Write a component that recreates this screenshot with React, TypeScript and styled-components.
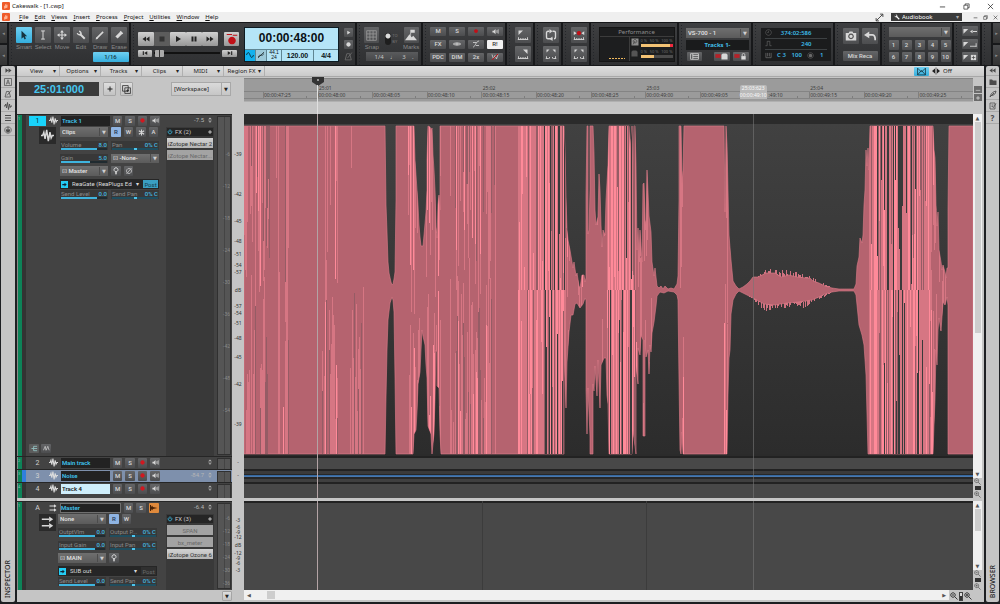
import React from "react";
import styled, { createGlobalStyle, css } from "styled-components";

const GlobalStyle = createGlobalStyle`
  * { box-sizing: border-box; }
  html, body { margin: 0; padding: 0; }
  body { background: #1d1f22; color: #222; font: 6px/8px "Noto Sans", "Open Sans", sans-serif; }
  button, input, select { font: inherit; color: inherit; border: 0; margin: 0; padding: 0; border-radius: 0; min-width: 0; }
  button { cursor: pointer; }
  svg { display: block; flex: none; }
`;

/* ---------- icons ---------- */

type IconShape = { d: string; fill?: boolean; w?: number; color?: string };

const icons: Record<string, IconShape[]> = {
  arrow: [{ d: "M4 1 L4 14 L7 11 L9 15 L11 14 L9.500 10 L13 10Z", fill: true }],
  ibeam: [{ d: "M5 1.500H11M5 14.500H11M8 1.500V14.500", w: 1.6 }],
  move: [{ d: "M8 2V14M2 8H14", w: 1.8 }, { d: "M8 0l3 4H5zM8 16l3-4H5zM0 8l4-3v6zM16 8l-4-3v6z", fill: true }],
  wrench: [{ d: "M6 6 L14 14", w: 3 }, { d: "M2 5a4 4 0 0 0 6 2M5 2a4 4 0 0 1 3 5", w: 2.2 }],
  draw: [{ d: "M3 13L13 3", w: 2.6 }, { d: "M1 15l1-4 3 3z", fill: true }],
  erase: [{ d: "M4 12L12 4", w: 5 }, { d: "M10 2l4 4", w: 2 }],
  rew: [{ d: "M8 3v10L1 8zM15 3v10L8 8z", fill: true }],
  ffw: [{ d: "M8 3v10l7-5zM1 3v10l7-5z", fill: true }],
  stop: [{ d: "M3 3h10v10H3z", fill: true }],
  play: [{ d: "M4 2v12l10-6z", fill: true }],
  pause: [{ d: "M3 3h4v10H3zM9 3h4v10H9z", fill: true }],
  toStart: [{ d: "M2 3h3v10H2zM14 3v10L6 8z", fill: true }],
  toEnd: [{ d: "M11 3h3v10h-3zM2 3v10l8-5z", fill: true }],
  record: [{ d: "M8 5a5 5 0 1 0 .01 0z", fill: true, color: "#c01018" }, { d: "M1 2H8M9 3h6", w: 1.6, color: "#c01018" }],
  dot: [{ d: "M8 3a5 5 0 1 0 .01 0z", fill: true }],
  grid: [{ d: "M1 1H15V15H1zM1 5.700H15M1 10.300H15M5.700 1V15M10.300 1V15", w: 1.2 }],
  marks: [{ d: "M0 15L6 7l3 4 2-2 5 6zM8 1h5v4H8z", fill: true }, { d: "M7.500 1V9", w: 1 }],
  speaker: [{ d: "M1 6h3l4-4v12l-4-4H1z", fill: true }, { d: "M10 5v6M12.500 4v8M15 3v10", w: 1.2 }],
  wave: [{ d: "M0 8H2L3.500 4L5 12L7 1L9 15L11 4L12.500 11L14 8H16", w: 1.8 }],
  sine: [{ d: "M1 8C4 0 6 3 8 8S12 16 15 8", w: 1.5 }],
  slash: [{ d: "M2 14L14 2M3 12C3 5 13 12 13 5", w: 1.3 }],
  metronome: [{ d: "M5 3h5l3 11H2zM6 11l8-10", w: 1.5 }],
  flagStart: [{ d: "M2 2h6l-6 6z", fill: true }, { d: "M1 14H15M2 14v-3M5 14v-2M8 14v-2M11 14v-2M14 14v-3", w: 1.2 }],
  flagEnd: [{ d: "M14 2H8l6 6z", fill: true }, { d: "M1 14H15M2 14v-3M5 14v-2M8 14v-2M11 14v-2M14 14v-3", w: 1.2 }],
  loop: [{ d: "M6 3H4a2 2 0 0 0-2 2v6a2 2 0 0 0 2 2h6M10 3h2a2 2 0 0 1 2 2v6a2 2 0 0 1-2 2", w: 1.8 }, { d: "M6 0l4 3-4 3zM10 10v6l-4-3z", fill: true }],
  corners: [{ d: "M2 2h4L2 6zM14 2h-4l4 4z", fill: true }, { d: "M1 14H5M11 14h4M2 14v-3M14 14v-3M6 12v2M10 12v2", w: 1.2 }],
  punch: [{ d: "M1 3v5l4-2.500zM15 3v5l-4-2.500z", fill: true }, { d: "M8 2.500a3 3 0 1 0 .01 0z", fill: true, color: "#c01018" }, { d: "M1 14H15M2 14v-3M5 14v-2M8 14v-2M11 14v-2M14 14v-3", w: 1.2 }],
  camera: [{ d: "M1 4h4l1-2h4l1 2h4v10H1z", fill: true }, { d: "M8 5.500a3 3 0 1 0 .01 0z", w: 1.6, color: "#555" }],
  undo: [{ d: "M7 2v9L0 6.500z", fill: true }, { d: "M5 6.500h6c3 0 4 3 4 7", w: 2.4 }],
  clock: [{ d: "M8 1.500a6.500 6.500 0 1 0 .01 0zM8 4v4H5", w: 1.2 }],
  pulse: [{ d: "M1 13H5V3H11V13H15", w: 1.4 }],
  keys: [{ d: "M2 2V13H14V2M6 2v8M10 2v8", w: 1.8 }],
  knob: [{ d: "M8 1.500a6.500 6.500 0 1 0 .01 0z", w: 1.2 }, { d: "M8 4a4 4 0 1 0 .01 0z", fill: true }],
  marker: [{ d: "M1 2h11l-11 11z", fill: true }],
  left: [{ d: "M6 4l-6 4 6 4zM5 7h11v2H5z", fill: true }],
  lineTo: [{ d: "M0 12H15M14 5V13", w: 2 }],
  addBox: [{ d: "M2 2H14V14H2z", fill: true }, { d: "M8 4V12M4 8H12", w: 1.6, color: "#444" }],
  expand: [{ d: "M3 13L13 3M9 2h5v5M2 9v5h5", w: 1.3 }],
  min: [{ d: "M2 9H14", w: 1.6 }],
  restore: [{ d: "M2 5H11V14H2zM5 5V2H14V11H11", w: 1.4 }],
  close: [{ d: "M2 2L14 14M14 2L2 14", w: 1.5 }],
  plus: [{ d: "M8 3V13M3 8H13", w: 2 }],
  dup: [{ d: "M1 1H11V11H1zM5 5H15V15H5zM10 7.500v5M7.500 10h5", w: 1.3 }],
  fold: [{ d: "M1 3h5l2 2h7v9H1z", fill: true }],
  feather: [{ d: "M2 14C4 6 8 4 14 2C13 8 10 11 4 11M2 14L10 6", w: 1.8 }],
  note: [{ d: "M2 2h10v12H2zM5 6h4M5 9h3M14 3l-6 9", w: 1.5 }],
  list: [{ d: "M2 3H14M2 8H14M2 13H14", w: 2.4 }],
  letterBox: [{ d: "M1 1H15V15H1zM4.500 13L8 3.500L11.500 13M6 10h4", w: 1.4 }],
  dial: [{ d: "M8 1.500a6.500 6.500 0 1 0 .01 0z", w: 1.4 }, { d: "M8 5a4 4 0 1 0 .01 0zM7 2h2v5H7z", fill: true }],
  routes: [{ d: "M1 4H10M1 12H10", w: 2 }, { d: "M10 0.500l5 3.500-5 3.500zM10 8.500l5 3.500-5 3.500z", fill: true }],
  dblArrow: [{ d: "M8 1l4 4H4zM8 15l4-4H4z", fill: true }, { d: "M3 8H13", w: 1.6 }],
  power: [{ d: "M5 4a5 5 0 1 0 6 0M8 1v7", w: 2 }],
  star: [{ d: "M8 1V15M2 4L14 12M14 4L2 12", w: 2.4 }],
  crossfade: [{ d: "M1 2V14H15V2L8 9Z M1 14L8 6L15 14", w: 1.4 }],
  snapTo: [{ d: "M6 3v10L0 8zM10 3v10l6-5z", fill: true }, { d: "M8 1V15", w: 1.4 }],
  phase: [{ d: "M8 3a5 5 0 1 0 .01 0zM3 14L13 2", w: 1.4 }],
  mic: [{ d: "M8 1.500a4 4 0 1 0 .01 0zM8 10v5M6 12h4", w: 2 }],
  zoomIn: [{ d: "M6 1.500a4.500 4.500 0 1 0 .01 0zM9.500 9.500L15 15M6 4v4M4 6h4", w: 1.7 }],
  zoomOut: [{ d: "M6 1.500a4.500 4.500 0 1 0 .01 0zM9.500 9.500L15 15M4 6h4", w: 1.7 }],
  goRight: [{ d: "M1 6h7V2l7 6-7 6v-4H1z", fill: true }],
  zig: [{ d: "M1 12L5 3L7 12L11 3L14 12", w: 1.6 }],
  lanes: [{ d: "M1 8H6V3H14M6 8H14M6 8V13H14", w: 1.8 }],
  autom: [{ d: "M2 14C7 14 7 3 14 2M2 5h7M8 11h6", w: 1.6 }],
  noWrite: [{ d: "M2 3l3 9 3-7 3 7 3-9", w: 1.5 }, { d: "M2 14L14 2", w: 2, color: "#c01018" }],
  ends: [{ d: "M1 8h14M4 5L1 8l3 3M12 5l3 3-3 3M8 4v8M6 5v6M10 5v6", w: 1.5 }],
  burst: [{ d: "M1 2v12", w: 2 }, { d: "M1 8L4 3l2 3 9 2-9 2-2 3z", fill: true }],
  logo: [{ d: "M3 15V8l3-2V3l3-2v5l3-2v8z", fill: true }],
  lock: [{ d: "M3 7h10v8H3z", fill: true }, { d: "M5 7V4a3 3 0 0 1 6 0v3", w: 1.8 }],
  disk: [{ d: "M1 1h14v14H1z", fill: true }, { d: "M8 3a3.500 3.500 0 1 0 .01 0zM8 6L4 13", w: 1.5, color: "#444" }],
  ladder: [{ d: "M1 3H15V13H1zM5 3V13M5 6.300H15M5 9.600H15", w: 1.4 }],
  page: [{ d: "M4 1h8l3 3v11H1V4z", fill: true }],
  rec: [{ d: "M1 3h14v10H1z", fill: true }],
};

function Icon({ name, size = 8, color }: { name: string; size?: number; color?: string }) {
  return (
    <svg width={size} height={size} viewBox="0 0 16 16" aria-hidden="true" color={color}>
      {icons[name].map((s, i) => (
        <path
          key={i}
          d={s.d}
          fill={s.fill ? s.color || "currentColor" : "none"}
          stroke={s.fill ? "none" : s.color || "currentColor"}
          strokeWidth={s.w || 1.5}
        />
      ))}
    </svg>
  );
}

/* ---------- frame ---------- */

const Shell = styled.div`
  display: flex;
  flex-direction: column;
  min-height: 100vh;
  overflow: hidden;
`;
const TitleBar = styled.header`
  display: flex;
  align-items: center;
  gap: 2px;
  height: 12px;
  padding: 0 6px 0 2px;
  background: #fff;
  color: #111;
`;
const Logo = styled.span`
  display: grid;
  place-items: center;
  width: 8px;
  height: 8px;
  border-radius: 1px;
  background: #ef5b2a;
  color: #ffb596;
`;
const WindowButtons = styled.div<{ $gap: number }>`
  display: flex;
  margin-left: auto;
  gap: ${(p) => p.$gap}px;
  button { background: none; }
`;
const MenuBar = styled.nav`
  display: flex;
  align-items: center;
  height: 10px;
  padding: 0 2px;
  background: #efefef;
  color: #111;
`;
const MenuItem = styled.button`
  background: none;
  margin-right: 6px;
  &::first-letter { text-decoration: underline; }
`;
const MenuList = styled.div`
  display: flex;
  flex: 1;
  padding-left: 9px;
`;
const ScreenSelect = styled.label`
  display: flex;
  align-items: center;
  gap: 2px;
  width: 71px;
  height: 8px;
  margin: 0 11px 0 7px;
  padding: 0 3px;
  background: #3b3b3b;
  color: #fff;
  select { flex: 1; appearance: none; background: none; }
  &::after { content: "▾"; font: 6px/8px "DejaVu Sans", sans-serif; color: #aaa; }
`;

/* ---------- control bar ---------- */

const ControlBar = styled.section`
  display: flex;
  gap: 2px;
  height: 44px;
  padding: 1px 0;
  background: #17181a;
  color: #c6c6c6;
`;
const Module = styled.div<{ $w: number; $grow?: boolean; $dir?: string; $gap?: number }>`
  display: flex;
  flex: ${(p) => (p.$grow ? 1 : 0)} 0 ${(p) => p.$w}px;
  flex-direction: ${(p) => p.$dir || "row"};
  align-items: center;
  justify-content: center;
  gap: ${(p) => p.$gap ?? 3}px;
  padding: 0 2px 0 7px;
  overflow: hidden;
  background:
    radial-gradient(circle, #24262a 1px, transparent 1px) 1px 1px / 3px 3px repeat-y,
    linear-gradient(#3e3f41, #2f3032);
`;
const EdgeTabs = styled.div`
  display: grid;
  gap: 2px;
  width: 7px;
  button { background: linear-gradient(#4a4b4d, #333); color: #8c8c8c; font: 5px/8px "DejaVu Sans", sans-serif; }
`;
const Row = styled.div<{ $gap?: number }>`
  display: flex;
  align-items: center;
  gap: ${(p) => p.$gap ?? 3}px;
`;
const Stack = styled.div<{ $gap?: number }>`
  display: flex;
  flex-direction: column;
  gap: ${(p) => p.$gap ?? 3}px;
`;
const Key = styled.button<{ $w?: number; $h?: number; $tone?: "light" | "cyan" | "dark" | "blue" | "orange" | "on" }>`
  display: flex;
  align-items: center;
  justify-content: center;
  flex: none;
  width: ${(p) => p.$w ?? 16}px;
  height: ${(p) => p.$h ?? 9}px;
  border-radius: 1px;
  font-weight: 500;
  font-family: Roboto, sans-serif;
  line-height: 8px;
  background: linear-gradient(#646567, #4c4d4f);
  color: #d8d8d8;
  ${(p) => p.$tone === "light" && css`background: linear-gradient(#d0d0d0, #979797); color: #222;`}
  ${(p) => p.$tone === "on" && css`background: #f2f2f2; color: #333;`}
  ${(p) => p.$tone === "cyan" && css`background: linear-gradient(#6fd0f2, #35aedd); color: #16343f;`}
  ${(p) => p.$tone === "dark" && css`background: #5c5c5c; color: #333;`}
  ${(p) => p.$tone === "blue" && css`background: #8fb4e2; color: #1d3350;`}
  ${(p) => p.$tone === "orange" && css`background: #e08a3c; color: #4a2205;`}
`;
const Tool = styled.div`
  display: flex;
  flex-direction: column;
  align-items: center;
  gap: 1px;
  width: 19px;
  color: #8b8b8b;
  font: 6px/7px "Liberation Sans", Arial, sans-serif;
`;
const ModuleBody = styled.div`
  display: flex;
  flex-direction: column;
  gap: 1px;
  align-items: flex-end;
`;
const Position = styled.input`
  width: 66px;
  height: 7px;
  appearance: none;
  background: linear-gradient(#111, #111) center / 100% 2px no-repeat;
  &::-webkit-slider-thumb { appearance: none; width: 9px; height: 7px; border-radius: 1px; background: linear-gradient(90deg, #aaa 40%, #333 40% 60%, #aaa 60%); }
`;
const Lcd = styled.div`
  display: flex;
  flex-direction: column;
  width: 97px;
  height: 35px;
  border: 1px solid #0d1b22;
  background: #b5e5f7;
  color: #0a1216;
`;
const LcdTime = styled.div`
  flex: 1;
  text-align: center;
  font: bold 12px/21px "Liberation Sans", Arial, sans-serif;
`;
const LcdRow = styled.div`
  display: grid;
  grid-template-columns: 11px 11px 15px 1fr 24px;
  align-items: center;
  height: 12px;
  border-top: 1px solid #5f8592;
  text-align: center;
  font: bold 7px/11px "Liberation Sans", Arial, sans-serif;
  > * { border-right: 1px solid #5f8592; height: 11px; }
  > :last-child { border: 0; }
`;
const LcdIcon = styled.span<{ $on?: boolean }>`
  display: grid;
  place-items: center;
  background: ${(p) => (p.$on ? "#12b2ee" : "#9dc9d8")};
`;
const Rate = styled.span`
  font-size: 5px;
  font-weight: 400;
  line-height: 5px;
`;
const Switch = styled.span`
  width: 6px;
  height: 12px;
  border-radius: 3px;
  background: radial-gradient(circle at 3px 3px, #ddd 2px, transparent 3px), #1e1e1e;
`;
const SwitchText = styled.span`
  font-size: 4px;
  line-height: 6px;
  color: #777;
`;
const NoteLength = styled.div`
  display: flex;
  align-items: center;
  justify-content: space-between;
  width: 52px;
  height: 9px;
  padding: 0 4px 0 9px;
  background: linear-gradient(#5a5b5d, #464749);
`;
const Perf = styled.div`
  display: grid;
  grid-template: 9px 1fr / 29px 1fr;
  width: 76px;
  height: 35px;
  background: #1d1e1f;
  border: 1px solid #151515;
  color: #8f8f8f;
`;
const PerfTitle = styled.div`
  grid-column: 1 / 3;
  text-align: center;
  border-bottom: 1px solid #3c3c3c;
`;
const PerfCores = styled.div`
  align-self: end;
  height: 1px;
  margin: 0 4px 2px 9px;
  background: repeating-linear-gradient(90deg, #f0b95c 0 2px, transparent 2px 3px);
`;
const PerfMeters = styled.div`
  display: grid;
  grid-template: 1fr 1fr / 8px 1fr;
  gap: 0 2px;
  padding: 0 1px 1px;
  align-items: center;
  border-left: 1px solid #3c3c3c;
`;
const Meter = styled.div<{ $v: number; $hot?: boolean }>`
  font-size: 4px;
  line-height: 6px;
  display: flex;
  flex-wrap: wrap;
  justify-content: space-between;
  color: #6f6f6f;
  &::after {
    content: "";
    width: 100%;
    height: 3px;
    background: linear-gradient(90deg, #f3c274 ${(p) => p.$v}%, ${(p) => (p.$hot ? "#ef2a3e" : "#4b4b4b")} ${(p) => p.$v}%);
  }
`;
const Drop = styled.div<{ $h?: number }>`
  display: flex;
  width: 100%;
  height: ${(p) => p.$h ?? 10}px;
  align-items: center;
  background: linear-gradient(#6f6f6f, #5b5b5b);
  color: #e4e4e4;
  font: 500 6px/8px Roboto, "DejaVu Sans", sans-serif;
  select { flex: 1; height: 100%; appearance: none; background: none; padding-left: 2px; line-height: 8px; outline: none; }
  &::after { content: "▼"; width: 8px; flex: none; text-align: center; font: 5px/8px "DejaVu Sans", sans-serif; color: #d0d0d0; border-left: 1px solid #4c4c4c; }
`;
const Screen = styled.div`
  width: 100%;
  padding: 1px 0;
  text-align: center;
  background: #1a1b1c;
  color: #42bfe8;
  font-weight: 700;
`;
const NowTable = styled.dl`
  display: grid;
  grid-template-rows: repeat(3, 11px);
  width: 70px;
  margin: 0;
  padding: 0 4px;
  background: #1b1c1d;
  color: #6a6a6a;
  div { display: flex; align-items: center; gap: 3px; justify-content: space-between; border-bottom: 1px solid #3d4143; padding-right: 15px; }
  div:last-child { border: 0; padding-right: 3px; }
  dd { margin: 0; color: #3dbbe8; font-weight: 600; }
  dt { display: flex; }
`;
const NumberGrid = styled.div`
  display: grid;
  grid-template-columns: repeat(5, 10px);
  gap: 2px 3px;
  button { width: 10px; height: 10px; }
`;

/* ---------- body ---------- */

const Body = styled.main`
  display: grid;
  grid-template-columns: 14px minmax(0, 1fr) 13px;
  gap: 2px;
  flex: 1;
  padding: 0 1px 2px 1px;
  background: #1d1f22;
`;
const Dock = styled.aside`
  display: flex;
  flex-direction: column;
  background: #c5c5c5;
  border-radius: 2px;
  color: #4b4b4b;
  button { display: grid; place-items: center; height: 12px; border-bottom: 1px solid #aaa; background: none; font-size: 8px; font-weight: 700; }
  button:first-child { height: 10px; }
`;
const DockTitle = styled.span`
  margin-top: auto;
  padding: 4px 0 0;
  writing-mode: vertical-rl;
  transform: rotate(180deg);
  line-height: 14px;
  font-size: 7px;
  font-weight: 500;
  color: #222;
`;
const TrackView = styled.section`
  display: flex;
  flex-direction: column;
  background: #c5c5c5;
`;
const ViewMenu = styled.nav`
  display: flex;
  align-items: center;
  height: 11px;
  padding-left: 2px;
  background: linear-gradient(#dedede, #cacaca);
  border-bottom: 1px solid #a8a8a8;
`;
const ViewMenuItem = styled.button`
  display: flex;
  justify-content: space-between;
  align-items: center;
  width: 41px;
  height: 10px;
  padding: 0 3px 0 1px;
  background: none;
  border-right: 1px solid #b0b0b0;
  white-space: nowrap;
  span { flex: 1; text-align: center; }
  &::after { content: "▾"; font: 6px/8px "DejaVu Sans", sans-serif; }
`;
const ViewTools = styled.div`
  display: flex;
  align-items: center;
  gap: 3px;
  margin-left: auto;
  padding-right: 11px;
  label { display: flex; align-items: center; gap: 3px; }
  select { width: 30px; appearance: none; background: none; }
`;
const Columns = css`
  display: grid;
  grid-template-columns: 215px 12px minmax(0, 1fr) 11px;
  grid-template-rows: minmax(0, 1fr);
`;
const Head = styled.div`
  ${Columns}
  height: 37px;
`;
const HeadTools = styled.div`
  display: flex;
  gap: 4px;
  height: 14px;
  margin: 5px 1px 0 2px;
`;
const NowTime = styled.output`
  width: 80px;
  text-align: center;
  background: #3a3a3a;
  color: #45c6f0;
  font: bold 11px/14px "Liberation Sans", Arial, sans-serif;
`;
const PlainKey = styled.button`
  display: grid;
  place-items: center;
  width: 13px;
  border: 1px solid #a5a5a5;
  border-radius: 1px;
  background: linear-gradient(#dedede, #c2c2c2);
`;
const Workspace = styled.label`
  display: flex;
  width: 60px;
  margin-left: auto;
  border: 1px solid #a8a8a8;
  background: linear-gradient(#dadada, #c6c6c6);
  select { flex: 1; appearance: none; background: none; padding-left: 2px; }
  &::after { content: "▼"; width: 8px; text-align: center; border-left: 1px solid #a8a8a8; font: 5px/12px "DejaVu Sans", sans-serif; }
`;
const Ruler = styled.div`
  height: 24px;
  margin-top: 1px;
  background: #9b9b9b;
  border-top: 1px solid #858585;
  border-bottom: 1px solid #b0b0b0;
  color: #3e3e3e;
  font-size: 5px;
  line-height: 6px;
`;
const RulerRow = styled.div<{ $top?: boolean }>`
  display: flex;
  align-items: ${(p) => (p.$top ? "flex-end" : "center")};
  height: ${(p) => (p.$top ? 13 : 7)}px;
  border-bottom: 1px solid #848484;
`;
const RulerCell = styled.span<{ $n: number; $line?: boolean; $inset?: number }>`
  flex: ${(p) => p.$n} 1 0;
  min-width: 0;
  min-height: 6px;
  text-indent: ${(p) => p.$inset ?? 1}px;
  white-space: nowrap;
  ${(p) => p.$line && css`
    background:
      linear-gradient(#808080, #808080) 0 0 / 1px 100% no-repeat,
      linear-gradient(#7d7d7d, #7d7d7d) 80% 100% / 1px 2px no-repeat;
  `}
`;
const RulerZoom = styled.div`
  display: flex;
  flex-direction: column;
  gap: 1px;
  padding: 9px 2px 0 1px;
  button { display: grid; place-items: center; height: 7px; background: #6a6a6a; color: #ddd; }
`;

/* ---------- tracks ---------- */

const Tracks = styled.div`
  ${Columns}
  flex: 1;
  min-height: 384px;
`;
const Buses = styled.div`
  ${Columns}
  height: 89px;
  margin-top: 3px;
`;
const Strips = styled.div`
  display: flex;
  flex-direction: column;
  overflow: hidden;
  background: #2a2a2a;
  font: 6px/8px Roboto, sans-serif;
`;
const Strip = styled.article<{ $h?: number; $sel?: boolean }>`
  display: grid;
  grid-template-columns: 5px 4px minmax(0, 1fr) 50px 17px;
  grid-template-rows: minmax(0, 1fr);
  ${(p) => (p.$h ? css`height: ${p.$h}px;` : css`flex: 1;`)}
  min-height: 0;
  border-top: 1px solid #262626;
  overflow: hidden;
  background: ${(p) => (p.$sel ? "#7e90ac" : "#434343")};
`;
const ColorBar = styled.div`
  background: #0d8358;
  border-left: 1px solid #888;
  color: #7fc4a8;
  font-size: 4px;
`;
const Gutter = styled.div<{ $sel?: boolean }>`
  background: ${(p) => (p.$sel ? "#2f7fdc" : "#333")};
`;
const Controls = styled.div`
  display: flex;
  flex-direction: column;
  padding-left: 3px;
  height: 100%;
`;
const NameRow = styled.div`
  display: flex;
  align-items: center;
  gap: 3px;
  flex: none;
  height: 11px;
`;
const Num = styled.span<{ $on?: boolean }>`
  width: 17px;
  flex: none;
  height: 10px;
  text-align: center;
  font-size: 7px;
  line-height: 10px;
  color: #d2d2d2;
  ${(p) => p.$on && css`background: #19d3fb; color: #134;`}
`;
const NameField = styled.input<{ $edit?: boolean; $bus?: boolean }>`
  width: ${(p) => (p.$bus ? 61 : 49)}px;
  height: 10px;
  padding-left: 1px;
  background: ${(p) => (p.$edit ? "#cfeefb" : "#222")};
  color: ${(p) => (p.$edit ? "#222" : "#3fc3ee")};
  font-weight: 600;
  flex: none;
  ${(p) => p.$bus && css`border: 1px solid #6f6f6f; padding: 0;`}
`;
const Details = styled.div<{ $bus?: boolean }>`
  display: grid;
  flex: none;
  grid-template-columns: 17px 99px;
  gap: ${(p) => (p.$bus ? 2 : 4)}px;
  padding: 1px 0 0 10px;
`;
const TrackIcon = styled.div`
  display: grid;
  place-items: center;
  height: 17px;
  background: #2a2a2a;
  color: #d8d8d8;
`;
const Form = styled.div`
  display: flex;
  flex-direction: column;
  gap: 3px;
`;
const Pair = styled.div<{ $tight?: boolean }>`
  display: grid;
  grid-template-columns: 48px 48px;
  gap: 3px;
  height: 10px;
  align-items: center;
  ${(p) => p.$tight && css`margin-top: -3px;`}
`;
const Param = styled.label`
  display: grid;
  grid-template: 7px 2px / 1fr auto;
  padding: 0 1px;
  background: #383838;
  color: #8a8a8a;
  line-height: 7px;
  white-space: nowrap;
  output { color: #42bbe4; font-weight: 500; }
  input { grid-column: 1 / 3; }
`;
const Range = styled.input<{ $v: number; $center?: boolean }>`
  appearance: none;
  width: 100%;
  height: 2px;
  background: ${(p) =>
    p.$center
      ? "linear-gradient(90deg, #1f4d5e 48%, #4cc5ee 48% 54%, #1f4d5e 54%)"
      : `linear-gradient(90deg, #3fb4de ${p.$v}%, #202b30 ${p.$v}%)`};
  &::-webkit-slider-thumb { appearance: none; width: 1px; height: 1px; opacity: 0; }
`;
const SendBox = styled.div`
  display: flex;
  align-items: center;
  gap: 4px;
  height: 10px;
  padding: 0 1px;
  background: #262626;
  color: #dcdcdc;
  white-space: nowrap;
  select { flex: 1; appearance: none; background: none; }
  i { font: 6px/8px "DejaVu Sans", sans-serif; }
`;
const SendOn = styled.button`
  display: grid;
  place-items: center;
  width: 7px;
  height: 7px;
  background: #24cdf5;
  color: #123;
`;
const Post = styled.button<{ $on?: boolean }>`
  width: 15px;
  height: 8px;
  line-height: 7px;
  background: ${(p) => (p.$on ? "#3a9fc2" : "#303030")};
  color: ${(p) => (p.$on ? "#163c4b" : "#6a6a6a")};
`;
const LaneKeys = styled.div`
  display: flex;
  gap: 2px;
  margin-top: auto;
  padding-bottom: 3px;
`;
const FxCol = styled.div`
  display: flex;
  flex-direction: column;
  gap: 2px;
  padding: 0 1px;
  color: #c9c9c9;
`;
const Peak = styled.div`
  display: flex;
  align-items: center;
  justify-content: flex-end;
  gap: 3px;
  height: 10px;
  padding-right: 1px;
  color: #b5b5b5;
`;
const FxRack = styled.div`
  display: flex;
  flex: 1;
  flex-direction: column;
  gap: 2px;
  padding: 1px;
  background: #393939;
`;
const FxHead = styled.div`
  display: flex;
  align-items: center;
  gap: 2px;
  height: 8px;
  background: #252525;
  button { margin-left: auto; background: none; color: #eee; }
`;
const FxSlot = styled.button<{ $off?: boolean }>`
  height: 10px;
  overflow: hidden;
  line-height: 9px;
  white-space: nowrap;
  background: linear-gradient(#d2d2d2, #b5b5b5);
  color: #333;
  ${(p) => p.$off && css`background: #a3a3a3; color: #6a6a6a;`}
`;
const Vu = styled.div`
  display: flex;
  flex-direction: column;
  gap: 24px;
  margin: 1px 1px 1px 2px;
  padding-top: 33px;
  overflow: hidden;
  background: linear-gradient(90deg, #555 6px, #444 6px 7px, #555 7px);
  border: 1px solid #303030;
  color: #8a8a8a;
  font-size: 5px;
  text-align: right;
`;
const VuBus = styled(Vu)`
  padding-top: 10px;
  gap: 5px;
`;
const Scale = styled.div`
  display: flex;
  flex-direction: column;
  font-size: 5px;
  line-height: 6px;
  color: #333;
  background: #c5c5c5;
`;
const Tick = styled.span<{ $n: number }>`
  display: flex;
  flex: ${(p) => p.$n} 1 0;
  min-height: 0;
  align-items: flex-end;
  justify-content: center;
`;
const Clips = styled.div`
  position: relative;
  display: flex;
  flex-direction: column;
  background: #262626;
`;
const Lane = styled.div<{ $h?: number; $kind?: "audio" | "line" }>`
  ${(p) => (p.$h ? css`height: ${p.$h}px;` : css`flex: 1;`)}
  border-top: 2px solid #222;
  background: #484848;
  ${(p) =>
    p.$kind === "line" &&
    css`background: linear-gradient(#3a3a3a 3px, #272727 3px 4px, #35689f 4px 5px, #4a78ad 5px 6px, #272727 6px 8px, #3f3f3f 8px);`}
`;
const WaveLane = styled.div`
  display: flex;
  flex-direction: column;
  flex: 1;
  padding-top: 10px;
  background: #2b2b2b;
  svg { width: 100%; height: 100%; }
`;
const WaveFill = styled.div`
  flex: 1 1 0;
  min-height: 0;
`;
const BeatLine = styled.i<{ $x: number; $strong?: boolean }>`
  position: absolute;
  top: 0;
  bottom: 0;
  left: ${(p) => p.$x}%;
  width: 1px;
  background: ${(p) => (p.$strong ? "#b3a3a5" : "#3c3c3c")};
`;
const Hover = styled(BeatLine)`
  background: #77777799;
`;
const PlayMarker = styled.div`
  position: absolute;
  top: 0;
  left: 10%;
  margin-left: -5px;
`;
const RulerWrap = styled.div`
  position: relative;
  &::after { content: ""; position: absolute; left: 10%; top: 8px; bottom: 0; width: 1px; background: #e0e0e0; }
`;
const HoverTag = styled.span`
  position: absolute;
  left: 68%;
  top: 8px;
  width: 27px;
  height: 14px;
  border-radius: 2px 2px 0 0;
  background: #b9b9b9;
  color: #fafafa;
  font-size: 5px;
  line-height: 7px;
  text-align: center;
  white-space: nowrap;
  span { display: block; }
`;
const VScroll = styled.div`
  display: flex;
  flex-direction: column;
  align-items: center;
  background: #f0f0f0;
  border-right: 2px solid #c5c5c5;
  color: #555;
  font: 5px/8px "DejaVu Sans", sans-serif;
`;
const VThumb = styled.i<{ $h: number }>`
  width: 6px;
  height: ${(p) => p.$h}%;
  margin-bottom: auto;
  background: #cdcdcd;
`;
const ZoomStack = styled.div`
  display: flex;
  flex-direction: column;
  align-items: center;
  align-self: stretch;
  background: #c5c5c5;
  button { background: none; display: block; }
  i { width: 6px; height: 4px; margin: 1px 0; background: #333; }
`;
const Foot = styled.div`
  ${Columns}
  grid-template-columns: 215px 12px minmax(0, 1fr) 35px;
  height: 12px;
`;
const FootKey = styled(PlainKey)`
  width: 10px;
  height: 10px;
  margin: 1px 0 0 auto;
  font: 5px/8px "DejaVu Sans", sans-serif;
`;
const HScroll = styled.div`
  display: flex;
  align-items: center;
  gap: 16px;
  height: 10px;
  padding: 0 3px;
  background: #f0f0f0;
  color: #555;
  font: 5px/8px "DejaVu Sans", sans-serif;
  i { width: 8px; height: 8px; background: #cdcdcd; margin-right: auto; }
`;
const HZoom = styled.div`
  display: flex;
  align-items: center;
  gap: 1px;
  padding-left: 1px;
  button { background: none; }
  i { width: 4px; height: 9px; border: 1px solid #444; background: linear-gradient(#ddd 50%, #333 50%); }
`;

/* ---------- waveform ---------- */

const X0 = 244;
const Y0 = 124;
const MID = 290;

// Upper and lower outlines of the clip, as x,y pairs.
const upper =
  "244,126 385,126 386,205 387,232 388,262 389,273 391,282 392,285 393,284 394,279 395,272 396,200 396,126 414,126 415,160 417,190 418,205 419,225 420,237 421,246 423,246 424,235 426,212 427,190 427,160 428,126 430,127 431,131 432,128 433,155 434,170 435,190 436,227 437,238 438,205 439,195 440,210 440,126 564,126 565,150 566,197 567,230 568,240 570,250 572,262 573,268 574,262 576,276 577,273 579,286 580,288 582,275 584,275 585,282 586,278 586,196 587,126 588,126 588,234 589,230 590,190 590,126 593,126 594,153 595,210 596,225 598,217 599,174 600,190 601,225 602,247 603,230 605,235 606,200 608,165 609,126 629,126 630,150 632,126 633,190 634,126 635,126 636,165 637,250 638,228 639,260 640,230 642,262 643,184 644,183 645,220 646,225 647,170 648,192 649,216 651,232 652,262 654,276 655,268 657,286 659,288 661,286 663,289 665,286 668,289 671,288 674,289 677,284 678,276 679,200 679,126 681,126 682,185 683,170 684,126 724,126 725,212 726,126 727,145 728,190 729,235 731,260 733,281 736,286 739,289 743,287 747,284 750,281 753,277 758,277 766,273 775,273 781,277 789,275 797,277 806,278 810,278 813,281 819,283 825,286 832,288 839,289 854,289 856,284 857,266 859,257 860,238 862,243 863,235 864,205 865,190 866,150 867,166 868,148 869,170 870,126 933,126 934,150 935,158 936,205 937,226 938,212 939,250 941,262 942,270 943,265 945,272 946,278 947,268 948,268 948,210 949,126 973,126";
const lower =
  "973,454 948,454 948,305 947,297 945,305 943,302 941,331 939,318 938,330 937,365 936,350 935,400 934,425 933,454 868,454 866,375 864,345 862,335 859,325 857,305 856,295 854,291 839,291 832,292 825,294 819,297 812,300 806,301 798,302 787,303 774,305 764,304 755,299 749,296 743,293 739,291 736,294 733,300 731,314 730,350 729,358 728,395 727,454 683,454 682,432 681,454 680,450 679,380 678,300 677,295 674,292 668,291 664,293 660,292 657,296 656,306 654,322 652,333 651,352 650,345 649,374 648,350 646,357 645,340 645,436 643,436 643,340 641,335 640,355 638,348 638,384 636,366 636,454 633,430 632,454 609,454 608,404 607,395 606,358 604,358 601,365 600,408 598,360 597,396 595,366 594,391 593,384 593,454 590,454 590,436 588,388 587,434 586,390 586,300 585,298 583,304 580,308 577,303 575,304 573,315 571,315 569,332 567,362 566,408 564,350 564,454 441,454 440,433 439,388 437,386 437,352 436,350 435,398 434,433 432,454 431,434 428,426 427,378 426,365 425,345 423,336 422,330 421,350 420,372 418,384 417,412 416,430 414,434 413,454 396,454 395,378 394,312 393,300 392,297 391,300 390,303 388,320 387,350 386,397 385,454 244,454";

// Dense bursts are striped from edge to centre; the others carry partial streaks.
// up/down give the share of columns streaked above and below the centre line.
type Burst = { a: number; b: number; up: number; down: number; dense?: boolean; dark?: number; bright?: number; gaps?: number };
const bursts: Burst[] = [
  { a: 244, b: 254, up: 0.5, down: 0.6, dark: 0.1 },
  { a: 253, b: 270, up: 0.85, down: 0.7, dark: 0.3, bright: 0.2 },
  { a: 270, b: 279, up: 0.4, down: 0.35 },
  { a: 279, b: 284, up: 0, down: 0.6 },
  { a: 285, b: 289, up: 1, down: 1, dark: 0.3 },
  { a: 322, b: 338, up: 0.15, down: 0.7, dark: 0.3 },
  { a: 350, b: 367, up: 0.4, down: 0.7, dark: 0.3 },
  { a: 407, b: 420, up: 0.6, down: 0.5, bright: 0.3 },
  { a: 425, b: 441, up: 0.6, down: 0.6, bright: 0.3 },
  { a: 450, b: 462, up: 0.4, down: 0.8, dark: 0.25 },
  { a: 462, b: 492, up: 0.65, down: 0.9, dark: 0.35, bright: 0.18 },
  { a: 490, b: 498, up: 0.8, down: 0.4, dark: 0.15 },
  { a: 518, b: 544, up: 1, down: 1, dense: true, dark: 0.18, bright: 0.22, gaps: 0 },
  { a: 544, b: 566, up: 1, down: 1, dense: true, dark: 0.25, bright: 0.35, gaps: 0.16 },
  { a: 566, b: 586, up: 0.7, down: 0.7, bright: 0.5 },
  { a: 594, b: 607, up: 0.3, down: 0.4, bright: 0.2 },
  { a: 607, b: 636, up: 1, down: 1, dense: true, dark: 0.2, bright: 0.38, gaps: 0.06 },
  { a: 636, b: 656, up: 0.5, down: 0.5, bright: 0.2 },
  { a: 680, b: 684, up: 0.7, down: 0.7 },
  { a: 724, b: 728, up: 0.7, down: 0.7, bright: 0.3 },
  { a: 869, b: 880, up: 1, down: 1, dense: true, dark: 0.1, bright: 0.3, gaps: 0.05 },
  { a: 880, b: 904, up: 1, down: 1, dense: true, dark: 0.28, bright: 0.22, gaps: 0.2 },
  { a: 904, b: 930, up: 1, down: 1, dense: true, dark: 0.22, bright: 0.2, gaps: 0.1 },
  { a: 930, b: 948, up: 0.85, down: 0.85, bright: 0.55 },
];

function makeRandom(seed: number) {
  return () => {
    seed = (seed * 16807) % 2147483647;
    return seed / 2147483647;
  };
}

function buildStreaks() {
  const rnd = makeRandom(97);
  const out: Record<string, string> = { "#d67683": "", "#ff8a99": "", "#955c65": "", "#3a3a3a": "" };
  const add = (c: string, x: number, y: number, h: number) => {
    out[c] += `M${x} ${Math.round(y)}h1v${Math.round(h)}h-1z`;
  };
  for (const r of bursts) {
    for (let x = r.a; x < r.b; x++) {
      for (const up of [true, false]) {
        if (rnd() > (up ? r.up : r.down)) continue;
        const k = rnd();
        const bright = r.bright ?? 0.08;
        const dark = r.dark ?? 0;
        const c = k < bright ? "#ff8a99" : k < bright + dark ? "#955c65" : "#d67683";
        if (r.dense) {
          const cut = rnd() < 0.5 ? 164 : 50 + rnd() * 110;
          add(rnd() < (r.gaps ?? 0) ? "#3a3a3a" : c, x, up ? 126 : 454 - cut, cut);
          if (cut < 164) add(rnd() < 0.35 ? "#ff8a99" : "#d67683", x, up ? 126 + cut : MID, 164 - cut);
        } else {
          const len = 30 + rnd() * 134;
          add(c, x, up ? 126 : 454 - len, len);
          if (rnd() < 0.5) add("#d67683", x, up ? 126 + len : 454 - len - 40, 40);
        }
      }
    }
  }
  return out;
}

// Peaks of the quiet breath between the two loud phrases.
function buildBreath() {
  const rnd = makeRandom(41);
  let d = "";
  for (let x = 742; x < 836; x++) {
    const amp = x < 766 ? ((x - 740) / 26) * 20 : x < 808 ? 20 - ((x - 766) / 42) * 4 : ((836 - x) / 28) * 14;
    const a = Math.round(amp * (0.6 + rnd() * 0.5));
    const b = Math.round(amp * (0.6 + rnd() * 0.5));
    d += `M${x} ${MID - a}h1v${Math.round(a * 0.35)}h-1zM${x} ${MID + b}h1v-${Math.round(b * 0.35)}h-1z`;
  }
  return d;
}
const streaks = buildStreaks();
const breath = buildBreath();
const outline = `M${upper} L${lower}Z`;

function Waveform() {
  return (
    <svg viewBox={`${X0} ${Y0} 729 332`} preserveAspectRatio="none" role="img" aria-label="Track 1 audio clip">
      <defs>
        <linearGradient id="clipBg" x1="0" y1="0" x2="0" y2="1">
          <stop offset="0" stopColor="#414141" />
          <stop offset="1" stopColor="#2c2c2c" />
        </linearGradient>
        <clipPath id="clipShape">
          <path d={outline} />
        </clipPath>
      </defs>
      <rect x={X0} y={Y0} width="729" height="330" fill="url(#clipBg)" />
      <path d={breath} fill="#cf7280" shapeRendering="crispEdges" />
      <path d={outline} fill="#b5636f" />
      <path d={outline} fill="none" stroke="#dd7b88" strokeWidth="1" strokeOpacity="0.6" />
      <g clipPath="url(#clipShape)" shapeRendering="crispEdges">
        {Object.entries(streaks).map(([c, d]) => (
          <path key={c} d={d} fill={c} />
        ))}
      </g>
    </svg>
  );
}

/* ---------- composed parts ---------- */

function Knob({ label, value, fill, center }: { label: string; value: string; fill?: number; center?: boolean }) {
  return (
    <Param>
      <span>{label}</span>
      <output>{value}</output>
      <Range type="range" defaultValue={fill ?? 50} $v={fill ?? 50} $center={center} />
    </Param>
  );
}

function Choice({ value, label, h }: { value: string; label: string; h?: number }) {
  return (
    <Drop $h={h}>
      <select aria-label={label} defaultValue={value}>
        <option>{value}</option>
      </select>
    </Drop>
  );
}

function TrackKeys() {
  return (
    <>
      <Key $w={9} $h={10}>M</Key>
      <Key $w={10} $h={10}>S</Key>
      <Key $w={9} $h={10} aria-label="Record"><Icon name="dot" size={7} color="#d01820" /></Key>
      <Key $w={10} $h={10} aria-label="Echo"><Icon name="speaker" size={7} /></Key>
    </>
  );
}

function SmallTrack({ n, name, h, sel, edit, peak }: { n: number; name: string; h: number; sel?: boolean; edit?: boolean; peak?: string }) {
  return (
    <Strip $h={h} $sel={sel}>
      <ColorBar>{n}</ColorBar>
      <Gutter $sel={sel} />
      <Controls>
        <NameRow>
          <Num>{n}</Num>
          <Icon name="wave" size={9} color="#ddd" />
          <NameField aria-label={`Track ${n} name`} defaultValue={name} $edit={edit} />
          <TrackKeys />
        </NameRow>
      </Controls>
      <FxCol><Peak>{peak}<Icon name="dblArrow" size={6} /></Peak></FxCol>
      <Vu />
    </Strip>
  );
}

const tools = [
  ["arrow", "Smart"],
  ["ibeam", "Select"],
  ["move", "Move"],
  ["wrench", "Edit"],
  ["draw", "Draw"],
  ["erase", "Erase"],
];
const menus = ["File", "Edit", "Views", "Insert", "Process", "Project", "Utilities", "Window", "Help"];
const viewMenus = ["View", "Options", "Tracks", "Clips", "MIDI", "Region FX"];
const smpte = ["47:25", "48:00", "48:05", "48:10", "48:15", "48:20", "48:25", "49:00", "49:05", "49:10", "49:15", "49:20", "49:25"];
const hoverTime = "49:10";
const dbScale: [number, string][] = [
  [43, "-39"], [40, "-42"], [27, "-45"], [20, "-48"], [13, "-51"], [11, "-54"], [7, "-57"], [18, "dB"],
  [16, "-57"], [7, "-54"], [10, "-51"], [15, "-48"], [19, "-45"], [27, "-42"], [40, "-39"], [38, "-"], [13, "-"], [20, ""],
];
const busScale: [number, string][] = [
  [22, "-3"], [7, "-6"], [5, "-9"], [5, "-12"], [8, "dB"], [8, "-12"], [5, "-9"], [5, "-6"], [7, "-3"], [17, ""],
];

export default function App() {
  return (
    <Shell>
      <GlobalStyle />
      <TitleBar>
        <Logo><Icon name="logo" size={6} /></Logo>
        Cakewalk - [1.cwp]
        <WindowButtons $gap={17}>
          <button aria-label="Minimize"><Icon name="min" size={7} /></button>
          <button aria-label="Restore"><Icon name="restore" size={7} /></button>
          <button aria-label="Close"><Icon name="close" size={7} /></button>
        </WindowButtons>
      </TitleBar>
      <MenuBar>
        <Logo><Icon name="logo" size={6} /></Logo>
        <MenuList>
          {menus.map((m) => <MenuItem key={m}>{m}</MenuItem>)}
        </MenuList>
        <Icon name="expand" size={9} />
        <ScreenSelect>
          <Icon name="wrench" size={6} />
          <select aria-label="Screenset" defaultValue="Audiobook"><option>Audiobook</option></select>
        </ScreenSelect>
        <WindowButtons $gap={5}>
          <button aria-label="Minimize project"><Icon name="min" size={5} /></button>
          <button aria-label="Restore project"><Icon name="restore" size={5} /></button>
          <button aria-label="Close project"><Icon name="close" size={5} /></button>
        </WindowButtons>
      </MenuBar>

      <ControlBar>
        <EdgeTabs><button aria-label="Previous">◂</button><button aria-label="First">◂</button></EdgeTabs>
        <Module $w={120}>
          <ModuleBody>
            <Row $gap={0}>
              {tools.map(([ic, label], i) => (
                <Tool key={label}>
                  <Key $w={16} $h={16} $tone={i ? undefined : "cyan"} aria-label={label}><Icon name={ic} size={10} /></Key>
                  {label}
                </Tool>
              ))}
            </Row>
            <Key $w={36} $h={10} $tone="cyan">1/16</Key>
          </ModuleBody>
        </Module>
        <Module $w={224} $gap={5}>
          <Stack $gap={4}>
            <Row $gap={6}>
              <Row $gap={0}>
                {["rew", "stop", "play", "pause", "ffw"].map((n) => (
                  <Key key={n} $w={16} $h={14} $tone={n === "stop" ? "dark" : "light"} aria-label={n}><Icon name={n} size={8} /></Key>
                ))}
              </Row>
              <Key $w={15} $h={14} $tone="light" aria-label="Record"><Icon name="record" size={12} /></Key>
            </Row>
            <Row $gap={2}>
              <Key $w={14} $h={7} $tone="light" aria-label="To start"><Icon name="toStart" size={6} /></Key>
              <Position type="range" defaultValue={2} aria-label="Song position" />
              <Key $w={15} $h={7} $tone="light" aria-label="To end"><Icon name="toEnd" size={6} /></Key>
            </Row>
          </Stack>
          <Lcd>
            <LcdTime>00:00:48:00</LcdTime>
            <LcdRow>
              <LcdIcon $on><Icon name="sine" size={8} /></LcdIcon>
              <LcdIcon><Icon name="slash" size={8} /></LcdIcon>
              <Rate>44.1<br />24</Rate>
              <span>120.00</span>
              <span>4/4</span>
            </LcdRow>
          </Lcd>
          <Stack>
            <Key $w={9} $h={9} aria-label="Play mode"><Icon name="play" size={5} /></Key>
            <Key $w={9} $h={9} aria-label="Record mode"><Icon name="dot" size={7} /></Key>
            <Icon name="metronome" size={9} color="#6d6d6d" />
          </Stack>
        </Module>
        <Module $w={64} $dir="column" $gap={1}>
          <Row $gap={4}>
            <Tool><Key $w={15} $h={16} aria-label="Snap"><Icon name="grid" size={11} color="#999" /></Key>Snap</Tool>
            <Row $gap={1}><Switch /><SwitchText>TO<br />BY</SwitchText></Row>
            <Tool><Key $w={15} $h={16} aria-label="Marks"><Icon name="marks" size={12} /></Key>Marks</Tool>
          </Row>
          <NoteLength><span>1/4</span><span>♩</span><span>3</span><span>.</span></NoteLength>
        </Module>
        <Module $w={82} $dir="column" $gap={4}>
          <Row><Key>M</Key><Key>S</Key><Key aria-label="Arm"><Icon name="dot" size={6} color="#c01018" /></Key><Key aria-label="Echo"><Icon name="speaker" size={7} /></Key></Row>
          <Row><Key>FX</Key><Key aria-label="Stretch"><Icon name="ends" size={8} /></Key><Key aria-label="Automation"><Icon name="autom" size={8} /></Key><Key $tone="on">R!</Key></Row>
          <Row><Key>PDC</Key><Key>DIM</Key><Key>2x</Key><Key aria-label="Write off"><Icon name="noWrite" size={8} /></Key></Row>
        </Module>
        {[["flagStart", "flagEnd"], ["loop", "corners"], ["punch", "corners"]].map((pair, i) => (
          <Module key={i} $w={26} $dir="column" $gap={3}>
            {pair.map((n) => <Key key={n} $w={16} $h={16} aria-label={n}><Icon name={n} size={12} /></Key>)}
          </Module>
        ))}
        <Module $w={86}>
          <Perf>
            <PerfTitle>Performance</PerfTitle>
            <PerfCores />
            <PerfMeters>
              <Icon name="disk" size={8} />
              <Meter $v={90} $hot><span>0 %</span><span>50 %</span><span>100 %</span></Meter>
              <Icon name="page" size={7} color="#555" />
              <Meter $v={40}><span>0 %</span><span>50 %</span><span>100 %</span></Meter>
            </PerfMeters>
          </Perf>
        </Module>
        <Module $w={72} $dir="column" $gap={2}>
          <Choice value="VS-700 - 1" label="Control surface" />
          <Screen>Tracks 1-</Screen>
          <Row $gap={12}>
            <Key $w={15} aria-label="Strip"><Icon name="ladder" size={9} /></Key>
            <Row><Key aria-label="Write read"><Icon name="rec" size={6} color="#b52229" /><Icon name="page" size={7} /></Key><Key aria-label="Lock"><Icon name="rec" size={6} color="#b52229" /><Icon name="lock" size={7} /></Key></Row>
          </Row>
        </Module>
        <Module $w={80}>
          <NowTable>
            <div><dt><Icon name="clock" size={7} /></dt><dd>374:02:586</dd></div>
            <div><dt><Icon name="pulse" size={7} /></dt><dd>240</dd></div>
            <div><dt><Icon name="keys" size={7} /></dt><dd>C 3</dd><dd>100</dd><dt><Icon name="knob" size={7} /></dt><dd>1</dd></div>
          </NowTable>
        </Module>
        <Module $w={45} $dir="column" $gap={7}>
          <Row><Key $w={16} $h={16} aria-label="Snapshot"><Icon name="camera" size={12} /></Key><Key $w={16} $h={16} aria-label="Undo"><Icon name="undo" size={12} /></Key></Row>
          <Key $w={35} $h={10}>Mix Reca</Key>
        </Module>
        <Module $w={70} $dir="column" $gap={3}>
          <Choice value="" label="Screensets" />
          <NumberGrid>
            {Array.from({ length: 10 }, (_, i) => <Key key={i}>{i + 1}</Key>)}
          </NumberGrid>
        </Module>
        <Module $w={26} $dir="column" $gap={3}>
          {["left", "lineTo", "addBox"].map((n) => (
            <Key key={n} $w={16} $h={10} aria-label={`Marker ${n}`}><Icon name="marker" size={7} /><Icon name={n} size={7} /></Key>
          ))}
        </Module>
        <Module $w={3} $grow />
        <EdgeTabs><button aria-label="Next">▸</button><button aria-label="Last">▸</button></EdgeTabs>
      </ControlBar>

      <Body>
        <Dock>
          <button aria-label="Expand inspector"><Icon name="ffw" size={7} /></button>
          {["letterBox", "metronome", "wave", "list", "dial"].map((n) => <button key={n} aria-label={n}><Icon name={n} size={8} /></button>)}
          <DockTitle>INSPECTOR</DockTitle>
        </Dock>

        <TrackView>
          <ViewMenu>
            {viewMenus.map((m) => <ViewMenuItem key={m}><span>{m}</span></ViewMenuItem>)}
            <ViewTools>
              <Key $w={15} $h={9} $tone="cyan" aria-label="Crossfade"><Icon name="crossfade" size={9} /></Key>
              <label><Icon name="snapTo" size={8} /><select aria-label="Edit filter" defaultValue="Off"><option>Off</option></select></label>
            </ViewTools>
          </ViewMenu>
          <Head>
            <HeadTools>
              <NowTime>25:01:000</NowTime>
              <PlainKey aria-label="Add track"><Icon name="plus" size={8} /></PlainKey>
              <PlainKey aria-label="Duplicate track"><Icon name="dup" size={9} /></PlainKey>
              <Workspace><select aria-label="Workspace" defaultValue="[Workspace]"><option>[Workspace]</option></select></Workspace>
            </HeadTools>
            <span />
            <RulerWrap>
              <Ruler>
                <RulerRow $top>
                  <RulerCell $n={74} />
                  {["25:01", "25:02", "25:03", "25:04"].map((t) => <RulerCell key={t} $n={164}>{t}</RulerCell>)}
                </RulerRow>
                <RulerRow>
                  <RulerCell $n={19} />
                  {smpte.map((t) =>
                    t === hoverTime
                      ? <RulerCell key={t} $n={55} $line $inset={14}>:{t}</RulerCell>
                      : <RulerCell key={t} $n={55} $line>00:00:{t}</RulerCell>
                  )}
                </RulerRow>
              </Ruler>
              <HoverTag><span>25:03:623</span><span>00:00:{hoverTime}</span></HoverTag>
              <PlayMarker>
                <svg width="12" height="9" viewBox="0 0 12 9"><path d="M0 0H12V5L6 9L0 5Z" fill="#333" /><path d="M5 2h2v2H5z" fill="#999" /></svg>
              </PlayMarker>
            </RulerWrap>
            <RulerZoom>
              <button aria-label="Zoom out"><Icon name="min" size={6} /></button>
              <button aria-label="Zoom in"><Icon name="plus" size={6} /></button>
            </RulerZoom>
          </Head>

          <Tracks>
            <Strips>
              <Strip>
                <ColorBar>1</ColorBar>
                <Gutter />
                <Controls>
                  <NameRow>
                    <Num $on>1</Num>
                    <Icon name="wave" size={9} color="#ddd" />
                    <NameField aria-label="Track 1 name" defaultValue="Track 1" />
                    <TrackKeys />
                  </NameRow>
                  <Details>
                    <TrackIcon><Icon name="wave" size={13} /></TrackIcon>
                    <Form>
                      <Pair>
                        <Choice value="Clips" label="Edit filter" />
                        <Row>
                          <Key $w={10} $h={10} $tone="blue">R</Key><Key $w={9} $h={10}>W</Key>
                          <Key $w={10} $h={10} aria-label="Freeze"><Icon name="star" size={7} /></Key><Key $w={9} $h={10}>A</Key>
                        </Row>
                      </Pair>
                      <Pair><Knob label="Volume" value="8.0" fill={78} /><Knob label="Pan" value="0% C" center /></Pair>
                      <Pair><Knob label="Gain" value="5.0" fill={63} /><Choice value="⊡ -None-" label="Input" h={9} /></Pair>
                      <Pair>
                        <Choice value="⊡ Master" label="Output" />
                        <Row><Key $w={10} $h={10} aria-label="Mono"><Icon name="mic" size={8} /></Key><Key $w={9} $h={10} aria-label="Phase"><Icon name="phase" size={8} /></Key></Row>
                      </Pair>
                      <SendBox>
                        <SendOn aria-label="Send on"><Icon name="goRight" size={5} /></SendOn>
                        <select aria-label="Send" defaultValue="ReaGate (ReaPlugs Edi"><option>ReaGate (ReaPlugs Edi</option></select>
                        <i>▾</i>
                        <Post $on>Post</Post>
                      </SendBox>
                      <Pair $tight><Knob label="Send Level" value="0.0" fill={78} /><Knob label="Send Pan" value="0% C" center /></Pair>
                    </Form>
                  </Details>
                  <LaneKeys>
                    <Key $w={10} $h={9} $tone="dark" aria-label="Lanes"><Icon name="lanes" size={7} color="#9cc" /></Key>
                    <Key $w={10} $h={9} aria-label="Automation lanes"><Icon name="zig" size={7} /></Key>
                  </LaneKeys>
                </Controls>
                <FxCol>
                  <Peak>-7.5<Icon name="dblArrow" size={6} /></Peak>
                  <FxRack>
                    <FxHead><Icon name="power" size={6} color="#3fc3ee" />FX (2)<button aria-label="Add effect"><Icon name="plus" size={6} /></button></FxHead>
                    <FxSlot>iZotope Nectar 2</FxSlot>
                    <FxSlot $off>iZotope Nectar...</FxSlot>
                  </FxRack>
                </FxCol>
                <Vu>
                  {[6, 12, 18, 24, 30, 36, 42, 48, 54].map((n) => <span key={n}>-{n}</span>)}
                </Vu>
              </Strip>
              <SmallTrack n={2} name="Main track" h={13} />
              <SmallTrack n={3} name="Noise" h={13} sel peak="-84.7" />
              <SmallTrack n={4} name="Track 4" h={16} edit />
            </Strips>
            <Scale>{dbScale.map(([n, t], i) => <Tick key={i} $n={n}>{t}</Tick>)}</Scale>
            <Clips>
              <WaveLane><WaveFill><Waveform /></WaveFill></WaveLane>
              <Lane $h={13} />
              <Lane $h={13} $kind="line" />
              <Lane $h={16} />
              <BeatLine $x={10} $strong />
              <Hover $x={69.8} />
            </Clips>
            <VScroll>
              ▲<VThumb $h={55} />▼
              <ZoomStack>
                <button aria-label="Zoom out tracks"><Icon name="zoomOut" size={7} /></button><i />
                <button aria-label="Zoom in tracks"><Icon name="zoomIn" size={7} /></button>
              </ZoomStack>
            </VScroll>
          </Tracks>

          <Buses>
            <Strips>
              <Strip>
                <ColorBar>1</ColorBar>
                <Gutter />
                <Controls>
                  <NameRow>
                    <Num>A</Num>
                    <Icon name="routes" size={8} color="#ddd" />
                    <NameField aria-label="Bus name" defaultValue="Master" $bus />
                    <Key $w={9} $h={10}>M</Key><Key $w={10} $h={10}>S</Key>
                    <Key $w={10} $h={10} $tone="orange" aria-label="Bus waveform"><Icon name="burst" size={8} /></Key>
                  </NameRow>
                  <Details $bus>
                    <TrackIcon><Icon name="routes" size={13} /></TrackIcon>
                    <Form>
                      <Pair>
                        <Choice value="None" label="Bus filter" />
                        <Row><Key $w={10} $h={10} $tone="blue">R</Key><Key $w={9} $h={10}>W</Key></Row>
                      </Pair>
                      <Pair><Knob label="OutptVlm" value="0.0" fill={78} /><Knob label="Output P..." value="0% C" center /></Pair>
                      <Pair><Knob label="Input Gain" value="0.0" fill={78} /><Knob label="Input Pan" value="0% C" center /></Pair>
                      <Pair>
                        <Choice value="⊡ MAIN" label="Bus output" />
                        <Row><Key $w={10} $h={10} aria-label="Mono"><Icon name="mic" size={8} /></Key></Row>
                      </Pair>
                      <SendBox>
                        <SendOn aria-label="Send on"><Icon name="goRight" size={5} /></SendOn>
                        <select aria-label="Bus send" defaultValue="SUB out"><option>SUB out</option></select>
                        <i>▾</i>
                        <Post>Post</Post>
                      </SendBox>
                      <Pair $tight><Knob label="Send Level" value="0.0" fill={78} /><Knob label="Send Pan" value="0% C" center /></Pair>
                    </Form>
                  </Details>
                </Controls>
                <FxCol>
                  <Peak>-6.4<Icon name="dblArrow" size={6} /></Peak>
                  <FxRack>
                    <FxHead><Icon name="power" size={6} color="#3fc3ee" />FX (3)<button aria-label="Add effect"><Icon name="plus" size={6} /></button></FxHead>
                    <FxSlot $off>SPAN</FxSlot>
                    <FxSlot $off>bx_meter</FxSlot>
                    <FxSlot>iZotope Ozone 6</FxSlot>
                  </FxRack>
                </FxCol>
                <VuBus>
                  {[6, 12, 18, 24, 30, 36].map((n) => <span key={n}>-{n}</span>)}
                </VuBus>
              </Strip>
            </Strips>
            <Scale>{busScale.map(([n, t], i) => <Tick key={i} $n={n}>{t}</Tick>)}</Scale>
            <Clips>
              <Lane />
              <BeatLine $x={10} $strong />
              <BeatLine $x={32.6} />
              <BeatLine $x={55.2} />
              <Hover $x={69.8} />
            </Clips>
            <VScroll>
              ▲<VThumb $h={25} />▼
              <ZoomStack>
                <button aria-label="Zoom out buses"><Icon name="zoomOut" size={7} /></button><i />
                <button aria-label="Zoom in buses"><Icon name="zoomIn" size={7} /></button>
              </ZoomStack>
            </VScroll>
          </Buses>

          <Foot>
            <FootKey aria-label="Show bus pane">▼</FootKey>
            <span />
            <HScroll>◀<i />▶</HScroll>
            <HZoom>
              <button aria-label="Zoom out time"><Icon name="zoomOut" size={8} /></button><i />
              <button aria-label="Zoom in time"><Icon name="zoomIn" size={8} /></button>
            </HZoom>
          </Foot>
        </TrackView>

        <Dock>
          <button aria-label="Expand browser"><Icon name="rew" size={7} /></button>
          {["fold", "feather", "note"].map((n) => <button key={n} aria-label={n}><Icon name={n} size={8} /></button>)}
          <button aria-label="Help">?</button>
          <DockTitle>BROWSER</DockTitle>
        </Dock>
      </Body>
    </Shell>
  );
}
